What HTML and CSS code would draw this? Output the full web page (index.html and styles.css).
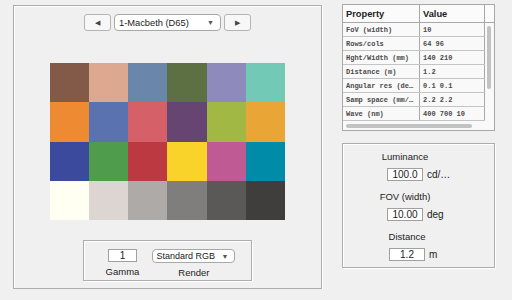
FILE: index.html
```html
<!DOCTYPE html>
<html lang="en">
<head>
<meta charset="UTF-8">
<title>Chart Viewer</title>
<meta name="viewport" content="width=device-width, initial-scale=1.0">
<link rel="stylesheet" href="styles.css">
</head>
<body>
  <div class="app">
    <div class="panel main-panel">
      <div class="toolbar">
        <button class="step-btn">&#9664;</button>
        <div class="select wide">
          <span>1-Macbeth (D65)</span>
          <span class="arrow">&#9660;</span>
        </div>
        <button class="step-btn">&#9654;</button>
      </div>

      <div class="chart">
        <div class="patch" style="background:#835a48"></div>
        <div class="patch" style="background:#dca990"></div>
        <div class="patch" style="background:#6a86aa"></div>
        <div class="patch" style="background:#5c7044"></div>
        <div class="patch" style="background:#8e8abb"></div>
        <div class="patch" style="background:#72c9b6"></div>
        <div class="patch" style="background:#ee8a32"></div>
        <div class="patch" style="background:#5a72b0"></div>
        <div class="patch" style="background:#d66068"></div>
        <div class="patch" style="background:#674572"></div>
        <div class="patch" style="background:#a2b845"></div>
        <div class="patch" style="background:#e9a637"></div>
        <div class="patch" style="background:#3c4a9d"></div>
        <div class="patch" style="background:#4f9c4c"></div>
        <div class="patch" style="background:#bd3942"></div>
        <div class="patch" style="background:#f9d22a"></div>
        <div class="patch" style="background:#c05a94"></div>
        <div class="patch" style="background:#008ca9"></div>
        <div class="patch" style="background:#fffff2"></div>
        <div class="patch" style="background:#dcd5d2"></div>
        <div class="patch" style="background:#adaaa7"></div>
        <div class="patch" style="background:#7f7e7c"></div>
        <div class="patch" style="background:#5a5958"></div>
        <div class="patch" style="background:#3f3e3d"></div>
      </div>

      <div class="panel render-panel">
        <div class="field">
          <div class="num-box gamma">1</div>
          <label>Gamma</label>
        </div>
        <div class="field">
          <div class="select render">
            <span>Standard RGB</span>
            <span class="arrow">&#9660;</span>
          </div>
          <label>Render</label>
        </div>
      </div>
    </div>

    <div class="side">
      <div class="table-box">
        <table class="props">
          <thead>
            <tr><th class="c-prop">Property</th><th class="c-val">Value</th><th class="c-pad"></th></tr>
          </thead>
          <tbody>
            <tr><td>FoV (width)</td><td>10</td></tr>
            <tr><td>Rows/cols</td><td>64 96</td></tr>
            <tr><td>Hght/Width (mm)</td><td>140 210</td></tr>
            <tr><td>Distance (m)</td><td>1.2</td></tr>
            <tr><td>Angular res (de&hellip;</td><td>0.1 0.1</td></tr>
            <tr><td>Samp space (mm/&hellip;</td><td>2.2 2.2</td></tr>
            <tr><td>Wave (nm)</td><td>400 700 10</td></tr>
          </tbody>
        </table>
        <div class="vscroll"></div>
        <div class="hscroll"></div>
      </div>

      <div class="panel params">
        <div class="param">
          <div class="param-label">Luminance</div>
          <div class="param-row">
            <div class="num-box">100.0</div>
            <span class="unit">cd/&hellip;</span>
          </div>
        </div>
        <div class="param">
          <div class="param-label">FOV (width)</div>
          <div class="param-row">
            <div class="num-box">10.00</div>
            <span class="unit">deg</span>
          </div>
        </div>
        <div class="param shifted">
          <div class="param-label">Distance</div>
          <div class="param-row">
            <div class="num-box">1.2</div>
            <span class="unit">m</span>
          </div>
        </div>
      </div>
    </div>
  </div>
</body>
</html>
```

FILE: styles.css
```css
body {
  margin: 0;
  background: #f0f0f0;
  font-family: 'Liberation Sans', Arial, sans-serif;
  font-size: 10px;
  color: #222;
}
.app {
  display: flex;
  align-items: flex-start;
  padding: 4px 0 0 13px;
}
.panel {
  border: 1px solid #adadad;
  box-shadow: inset 1px 1px 0 #fff, 1px 1px 0 #fff;
  box-sizing: border-box;
}
.main-panel {
  width: 309px;
  height: 284px;
  margin-top: 1px;
  display: flex;
  flex-direction: column;
  align-items: center;
}
.toolbar {
  display: flex;
  gap: 3px;
  margin-top: 8px;
  height: 17px;
}
.step-btn {
  width: 27px;
  height: 17px;
  padding: 0;
  border: 1px solid #b4b4b4;
  border-radius: 3px;
  background: #f7f7f7;
  color: #444;
  font-size: 6.5px;
  line-height: 15px;
}
.select {
  display: flex;
  align-items: center;
  justify-content: space-between;
  border: 1px solid #a8a8a8;
  border-radius: 4px;
  background: #fff;
  box-sizing: border-box;
  padding: 0 6px 0 4px;
  font-size: 9.3px;
}
.select.wide {
  width: 107px;
  height: 17px;
}
.select.render {
  width: 83px;
  height: 14px;
  font-size: 9px;
  padding-left: 3px;
}
.arrow {
  font-size: 7px;
  color: #555;
}
.chart {
  margin-top: 32px;
  width: 236px;
  height: 157px;
  display: grid;
  grid-template-columns: repeat(6, 1fr);
  grid-template-rows: repeat(4, 1fr);
}
.render-panel {
  margin-top: 20px;
  width: 169px;
  height: 41px;
  display: flex;
  justify-content: center;
  gap: 13px;
  padding-top: 8px;
  padding-left: 6px;
}
.field {
  display: flex;
  flex-direction: column;
  align-items: center;
  gap: 4px;
}
.field label {
  font-size: 9.5px;
}
.num-box {
  background: #fff;
  border: 1px solid #a0a0a0;
  box-sizing: border-box;
  height: 13px;
  line-height: 11px;
  text-align: center;
  font-size: 10px;
}
.gamma {
  width: 29px;
}
.side {
  margin-left: 20px;
  width: 153px;
}
.table-box {
  position: relative;
  height: 127px;
  border: 1px solid #a8a8a8;
  background: #f9f9f9;
  box-sizing: border-box;
  overflow: hidden;
}
.props {
  border-collapse: collapse;
  table-layout: fixed;
  width: 152px;
}
.props th {
  height: 17px;
  text-align: left;
  font-weight: bold;
  font-size: 9.3px;
  padding: 0 3px;
  background: #fbfbfb;
  border-right: 1px solid #a8a8a8;
  border-bottom: 1px solid #a8a8a8;
}
.c-prop { width: 70px; }
.c-val { width: 58px; }
.props td {
  height: 13px;
  padding: 0 3px;
  font-family: 'Liberation Mono', 'Courier New', monospace;
  font-size: 7px;
  font-weight: bold;
  color: #4a4a4a;
  white-space: nowrap;
  overflow: hidden;
  border-bottom: 1px solid #c4c4c4;
  border-right: 1px solid #a8a8a8;
}
.vscroll {
  position: absolute;
  left: 144px;
  top: 21px;
  width: 4px;
  height: 63px;
  border-radius: 2px;
  background: #c2c2c2;
}
.hscroll {
  position: absolute;
  left: 3px;
  top: 119px;
  width: 126px;
  height: 4px;
  border-radius: 2px;
  background: #c2c2c2;
}
.params {
  margin-top: 12px;
  height: 125px;
  padding: 7px 0 0 44px;
  display: flex;
  flex-direction: column;
  gap: 10px;
}
.param-label {
  width: 36px;
  display: flex;
  justify-content: center;
  white-space: nowrap;
  height: 12px;
  margin-bottom: 5px;
  font-size: 9.5px;
}
.param-row {
  display: flex;
  align-items: center;
  gap: 4px;
}
.param .num-box {
  width: 36px;
}
.shifted {
  margin-left: 2px;
}
.unit {
  font-size: 10px;
}
```
